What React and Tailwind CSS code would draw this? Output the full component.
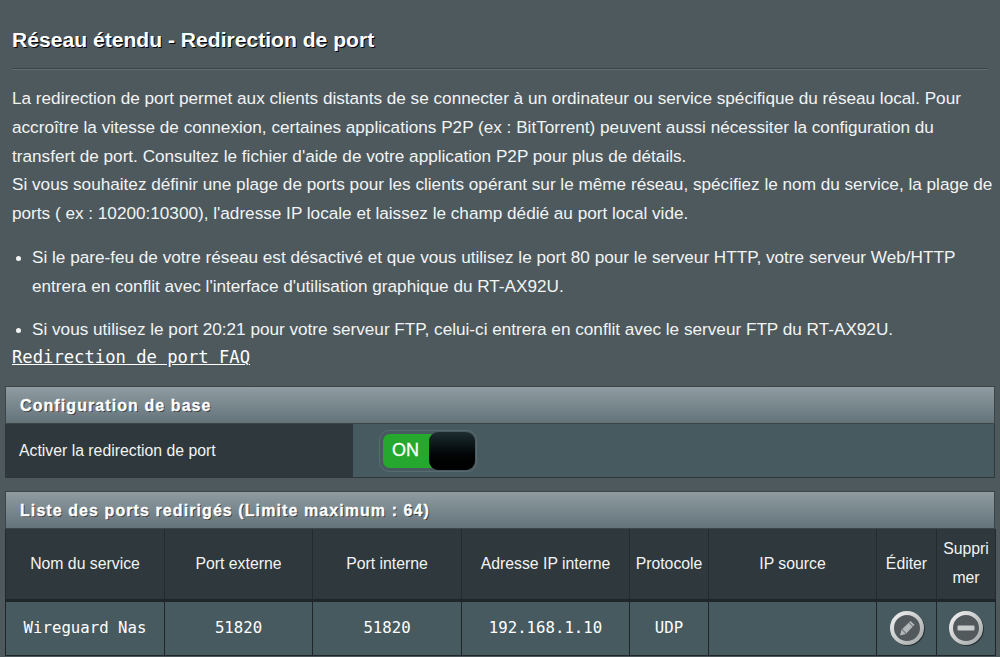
const sans = { fontFamily: '"Liberation Sans", Arial, sans-serif' };

function EditIcon() {
  return (
    <svg width="38" height="38" viewBox="0 0 38 38" className="block">
      <defs>
        <linearGradient id="ringA" x1="0" y1="0" x2="1" y2="1">
          <stop offset="0" stopColor="#f0f0f0" />
          <stop offset="1" stopColor="#a4a8a9" />
        </linearGradient>
      </defs>
      <circle cx="20" cy="20" r="17" fill="#1d2426" opacity="0.75" />
      <circle cx="19" cy="19" r="15" fill="#52595c" stroke="url(#ringA)" strokeWidth="4" />
      <path d="M12 26.5 L13.5 20.8 L22.5 12 L26.5 15.8 L17.8 25 Z" fill="#b4b8b9" />
      <path d="M14 20.5 L18 24.4" stroke="#52595c" strokeWidth="1" />
      <path d="M21 13.5 L25 17.5" stroke="#52595c" strokeWidth="1" />
    </svg>
  );
}

function DeleteIcon() {
  return (
    <svg width="38" height="38" viewBox="0 0 38 38" className="block">
      <defs>
        <linearGradient id="ringB" x1="0" y1="0" x2="1" y2="1">
          <stop offset="0" stopColor="#f0f0f0" />
          <stop offset="1" stopColor="#a4a8a9" />
        </linearGradient>
      </defs>
      <circle cx="20" cy="20" r="17" fill="#1d2426" opacity="0.75" />
      <circle cx="19" cy="19" r="15" fill="#52595c" stroke="url(#ringB)" strokeWidth="4" />
      <rect x="10.5" y="16.5" width="17" height="5" rx="1" fill="#c9cccd" />
    </svg>
  );
}

function SectionHead({ children }) {
  return (
    <div className="h-[38px] flex items-center pl-[14px] pt-[2px] border border-[#3b4548] bg-gradient-to-b from-[#8f9ca2] to-[#64737a] text-white text-[16px] font-bold tracking-[1.08px] [-webkit-text-stroke:0.3px_white] [text-shadow:1px_1px_0_#333]">
      {children}
    </div>
  );
}

const headers = [
  ['Nom du service', 'w-[159px]'],
  ['Port externe', 'w-[148px]'],
  ['Port interne', 'w-[149px]'],
  ['Adresse IP interne', 'w-[168px]'],
  ['Protocole', 'w-[79px]'],
  ['IP source', 'w-[168px]'],
  ['Éditer', 'w-[60px]'],
  ['Suppri mer', 'w-[59px]'],
];

const mono = 'font-["DejaVu_Sans_Mono",monospace] text-[15.7px] pb-[2px]';

export default function App() {
  return (
    <div className="w-[1000px] h-[657px] overflow-hidden bg-[#4e595e] text-white" style={sans}>
      <div className="px-3 pt-[28px]">
        <h1 className="text-[21.1px] leading-[23px] font-bold [text-shadow:1px_1px_0_#000]">Réseau étendu - Redirection de port</h1>
        <div className="mt-[17px] h-[2px] w-[976px] border-t border-[#3c4548] bg-[#5e6b70]" />
        <div className="mt-[14px] text-[17.17px] leading-[28.8px] text-[#f2f4f4] whitespace-nowrap">
          <p>La redirection de port permet aux clients distants de se connecter à un ordinateur ou service spécifique du réseau local. Pour</p>
          <p>accroître la vitesse de connexion, certaines applications P2P (ex : BitTorrent) peuvent aussi nécessiter la configuration du</p>
          <p>transfert de port. Consultez le fichier d'aide de votre application P2P pour plus de détails.</p>
          <p>Si vous souhaitez définir une plage de ports pour les clients opérant sur le même réseau, spécifiez le nom du service, la plage de</p>
          <p>ports ( ex : 10200:10300), l'adresse IP locale et laissez le champ dédié au port local vide.</p>
          <ul className="mt-[15px] list-disc pl-[20px] marker:text-[16px]">
            <li>Si le pare-feu de votre réseau est désactivé et que vous utilisez le port 80 pour le serveur HTTP, votre serveur Web/HTTP<br />entrera en conflit avec l'interface d'utilisation graphique du RT-AX92U.</li>
            <li className="mt-[14px]">Si vous utilisez le port 20:21 pour votre serveur FTP, celui-ci entrera en conflit avec le serveur FTP du RT-AX92U.</li>
          </ul>
        </div>
        <a className='block mt-[4px] font-["DejaVu_Sans_Mono",monospace] text-[17.2px] leading-[21px] underline text-white'>Redirection de port FAQ</a>
      </div>

      <div className="mx-[5px] mt-[18px] w-[990px]">
        <SectionHead>Configuration de base</SectionHead>
        <div className="h-[54px] flex border border-t-0 border-[#2e383b] bg-[#475a5f]">
          <div className="w-[347px] bg-[#2f383c] flex items-center pl-[13px] text-[15.8px] text-[#f2f4f4]">Activer la redirection de port</div>
          <div className="flex items-center pl-[26px]">
            <div className="w-[98px] h-[42px] rounded-[10px] border border-[#5a6a70] p-[3px]">
              <div className="relative h-full rounded-[7px] bg-[#25a82d] flex items-center pl-[9px] text-[18px] [-webkit-text-stroke:0.3px_white]">
                ON
                <div className="absolute right-[-2px] top-[-2px] w-[46px] h-[38px] rounded-[9px] bg-gradient-to-b from-[#1e2d31] to-[#000000]" />
              </div>
            </div>
          </div>
        </div>
      </div>

      <div className="mx-[5px] mt-[13px] w-[990px]">
        <SectionHead>Liste des ports redirigés (Limite maximum : 64)</SectionHead>
        <table className="w-[990px] table-fixed border-collapse">
          <thead>
            <tr className="h-[71px] bg-[#2f383c]">
              {headers.map(([label, w]) => (
                <th key={label} className={`${w} border-x border-[#222b2e] border-b-3 border-b-[#1f2629] px-0 pb-[2px] text-[15.8px] leading-[29px] font-normal text-[#f2f4f4]`}>
                  {label === 'Suppri mer' ? <>Suppri<br />mer</> : label}
                </th>
              ))}
            </tr>
          </thead>
          <tbody>
            <tr className="h-[55px] bg-[#475a5f] text-center">
              <td className={`border border-[#1f2629] ${mono}`}>Wireguard Nas</td>
              <td className={`border border-[#1f2629] ${mono}`}>51820</td>
              <td className={`border border-[#1f2629] ${mono}`}>51820</td>
              <td className={`border border-[#1f2629] ${mono}`}>192.168.1.10</td>
              <td className={`border border-[#1f2629] ${mono}`}>UDP</td>
              <td className="border border-[#1f2629]" />
              <td className="border border-[#1f2629]"><div className="flex justify-center"><EditIcon /></div></td>
              <td className="border border-[#1f2629]"><div className="flex justify-center"><DeleteIcon /></div></td>
            </tr>
          </tbody>
        </table>
      </div>
    </div>
  );
}
